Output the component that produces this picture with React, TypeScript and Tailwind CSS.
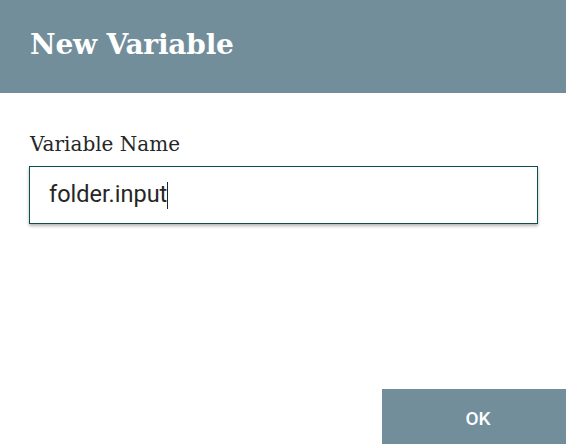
import React from 'react';

export default function App() {
  return (
    <div className="w-[566px] h-[444px] bg-white flex flex-col overflow-hidden">
      <div className="h-[93px] bg-[#728e9b] flex items-center px-[30px] shrink-0">
        <h1 className="text-white text-[28px] font-bold font-['DejaVu_Serif',serif] tracking-[-0.2px] mt-[-3px]">
          New Variable
        </h1>
      </div>

      <div className="flex-1 px-[29px] pt-[37px]">
        <label className="block text-[#262626] text-[20px] leading-[28px] font-['DejaVu_Serif',serif] ml-px mb-[8px]">
          Variable Name
        </label>
        <div className="w-[509px] h-[58px] border border-[#0d4f4f] bg-white shadow-[0_2px_3px_rgba(0,0,0,0.3)] flex items-center pl-[19px]">
          <span className="text-[23.5px] text-[#262626] font-['Roboto',sans-serif]">folder.input</span>
          <span className="w-px h-[27px] bg-[#262626]" />
        </div>
      </div>

      <div className="flex justify-end shrink-0">
        <button className="w-[184px] h-[55px] bg-[#728e9b] text-white text-[19px] font-medium font-['Roboto',sans-serif] pl-[8px] pt-[5px]">
          OK
        </button>
      </div>
    </div>
  );
}
